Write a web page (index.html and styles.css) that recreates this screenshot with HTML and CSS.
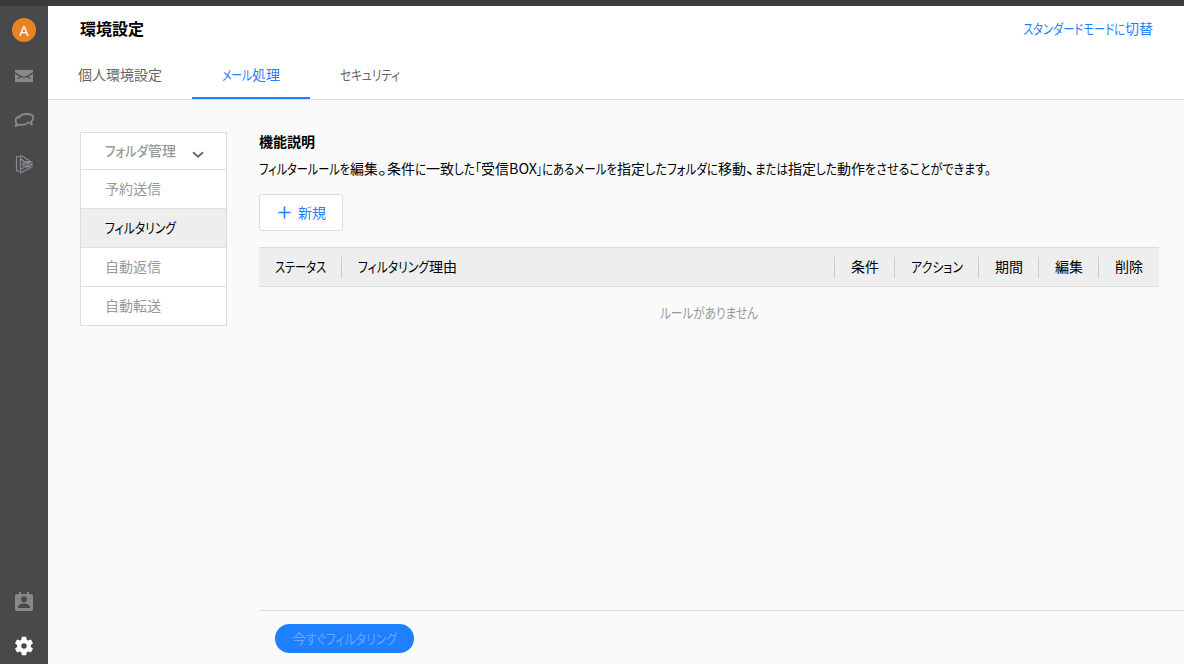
FILE: index.html
```html
<!DOCTYPE html>
<html lang="ja">
<head>
<meta charset="utf-8">
<title>環境設定</title>
<link rel="stylesheet" href="styles.css">
</head>
<body>
<div class="topbar"></div>
<div class="app">
  <nav class="rail">
    <div class="avatar">A</div>
    <svg class="icon mail" width="18" height="12" viewBox="0 0 18 12"><path fill="#86888a" d="M0 0h18v12H0z"/><path fill="none" stroke="#48494b" stroke-width="1.200" d="M0 2.800C3 5 6 7.300 9 7.300S15 5 18 2.800M5.800 6.200L2.800 8.400M12.200 6.200l3 2.200"/></svg>
    <svg class="icon chat" width="22" height="16" viewBox="0 0 22 16"><path fill="none" stroke="#86888a" stroke-width="1.800" stroke-linejoin="round" d="M5.500 6.500C7 3 10 2 13.500 2c4.500 0 6.800 1.200 6.800 3.700 0 1.600-.8 2.800-2 3.900l.6 2.900-2.800-1.900"/><path fill="none" stroke="#86888a" stroke-width="1.800" stroke-linejoin="round" d="M8 3.800C4.500 4.500 2.600 6.500 2.600 8.800c0 1 .4 1.800 1 2.400l-1 2.900 3.200-1.500c4 .6 8.200-.2 10.200-2.800"/></svg>
    <svg class="icon drive" width="18" height="20" viewBox="0 0 18 20"><path fill="none" stroke="#86888a" stroke-width="1.200" d="M4.500 17H1.500V2.500h3M5.500 1.300v17.400L16 13.500M5.500 1.300L15 7M5.500 4.800L9 7M5.500 15.200L9 13.500"/><path fill="#86888a" d="M7.500 7H17.500v6.500H7.500z"/><path fill="none" stroke="#48494b" stroke-width=".9" d="M7.500 8.200l5 2.800 5-2.800M8 12.800l2.500-2M17 12.800l-2.500-2"/></svg>
    <span class="spacer"></span>
    <svg class="icon contact" width="18" height="19" viewBox="0 0 18 19"><path fill="#86888a" fill-rule="evenodd" d="M4 0h2v2h6V0h2v2h2q2 0 2 2v13q0 2-2 2H2q-2 0-2-2V4q0-2 2-2h2zM9 4.200a3 3 0 1 0 0 6 3 3 0 0 0 0-6zM3 16h12v-1c0-2.200-3.500-3.500-6-3.500S3 12.800 3 15z"/></svg>
    <svg class="icon gear" width="24" height="24" viewBox="0 0 24 24"><path fill="#fff" d="M19.430 12.980c.04-.32.07-.64.07-.98s-.03-.66-.07-.98l2.110-1.650c.19-.15.24-.42.12-.64l-2-3.460c-.12-.22-.39-.3-.61-.22l-2.490 1c-.52-.4-1.080-.73-1.690-.98l-.38-2.650C14.460 2.180 14.250 2 14 2h-4c-.25 0-.46.180-.49.420l-.38 2.650c-.61.25-1.170.59-1.690.98l-2.490-1c-.23-.09-.49 0-.61.220l-2 3.460c-.13.220-.07.490.12.640l2.110 1.650c-.04.320-.07.650-.07.980s.03.660.07.980l-2.110 1.650c-.19.150-.24.420-.12.640l2 3.460c.12.220.39.300.61.220l2.490-1c.52.400 1.080.730 1.690.980l.38 2.650c.03.240.24.420.49.420h4c.25 0 .46-.18.49-.42l.38-2.650c.61-.25 1.170-.59 1.690-.98l2.490 1c.23.090.49 0 .61-.22l2-3.460c.12-.22.070-.49-.12-.64l-2.110-1.650zM12 15a3 3 0 1 1 0-6 3 3 0 0 1 0 6z"/></svg>
  </nav>
  <div class="page">
    <header class="header">
      <div class="titlebar">
        <h1 class="title">環境設定</h1>
        <a class="mode"><span data-w="102">スタンダードモードに</span>切替</a>
      </div>
      <div class="tabs">
        <a class="tab">個人環境設定</a>
        <a class="tab active"><span data-w="30">メール</span>処理</a>
        <a class="tab"><span data-w="60">セキュリティ</span></a>
      </div>
    </header>
    <div class="body">
      <aside class="menu">
        <a class="item folder"><span data-w="43">フォルダ</span>管理<svg class="chevron" width="12" height="8" viewBox="0 0 12 8"><path fill="none" stroke="#666" stroke-width="1.900" d="M1 1.200l5 4.600 5-4.600"/></svg></a>
        <a class="item">予約送信</a>
        <a class="item current"><span data-w="71">フィルタリング</span></a>
        <a class="item">自動返信</a>
        <a class="item">自動転送</a>
      </aside>
      <main class="main">
        <section class="content">
          <h2 class="heading">機能説明</h2>
          <p class="desc"><span data-w="91">フィルタールールを</span>編集<span class="stop" data-w="9">。</span>条件<span data-w="11">に</span>一致<span data-w="21">した</span><span data-w="6">「</span>受信<span data-w="28">BOX</span><span data-w="5">」</span><span data-w="75">にあるメールを</span>指定<span data-w="22">した</span><span data-w="51">フォルダに</span>移動<span data-w="9">、</span><span data-w="33">または</span>指定<span data-w="21">した</span>動作<span data-w="126">をさせることができます。</span></p>
          <button class="new"><svg width="13" height="13" viewBox="0 0 13 13"><path stroke="#1f80ff" stroke-width="1.500" d="M6.500 .5v12M.5 6.500h12"/></svg><span class="label">新規</span></button>
          <div class="thead">
            <div class="cell status"><span data-w="51">ステータス</span></div>
            <div class="cell reason"><span data-w="71">フィルタリング</span>理由</div>
            <div class="cell">条件</div>
            <div class="cell action"><span data-w="52">アクション</span></div>
            <div class="cell">期間</div>
            <div class="cell">編集</div>
            <div class="cell last">削除</div>
          </div>
          <p class="empty"><span data-w="98">ルールがありません</span></p>
        </section>
        <footer class="footer"><button class="run">今<span data-w="91">すぐフィルタリング</span></button></footer>
      </main>
    </div>
  </div>
</div>
<script src="fit.js"></script>
</body>
</html>
```
FILE: styles.css
```css
* { box-sizing: border-box; }
body {
  margin: 0; height: 664px; overflow: hidden; display: flex; flex-direction: column;
  font: 14px/20px "Noto Sans CJK JP", sans-serif; color: #000; background: #fafafa;
}
h1, h2, p { margin: 0; }
button { font: inherit; margin: 0; }
[data-w] { display: inline-block; white-space: nowrap; transform-origin: 0 50%; font-feature-settings: "palt"; }
.topbar { height: 6px; background: #3b3b3b; flex: none; }
.app { flex: 1; display: flex; min-height: 0; }
.rail { width: 48px; flex: none; background: #48494b; display: flex; flex-direction: column; align-items: center; padding: 12px 0 6px; }
.avatar { width: 24px; height: 24px; border-radius: 50%; background: #e98423; color: #fff; font: 15px/25px "Open Sans", sans-serif; text-align: center; }
.icon { flex: none; display: block; }
.mail { margin-top: 28px; }
.chat { margin-top: 30px; }
.drive { margin-top: 26px; }
.spacer { flex: 1; }
.gear { margin-top: 24px; width: 22px; height: 22px; margin-bottom: 1px; }
.page { flex: 1; min-width: 0; display: flex; flex-direction: column; }
.header { height: 94px; flex: none; background: #fff; border-bottom: 1px solid #ddd; display: flex; flex-direction: column; justify-content: space-between; }
.titlebar { display: flex; justify-content: space-between; padding: 12px 31px 0 32px; }
.title { font-size: 16px; line-height: 20px; font-weight: 700; }
.mode { color: #1f80ff; display: block; }
.tabs { display: flex; height: 50px; }
.tab { height: 50px; padding: 15px 30px 0; color: #666; }
.tab.active { color: #1f80ff; border-bottom: 2px solid #1f80ff; }
.body { flex: 1; display: flex; min-height: 0; padding-left: 32px; }
.menu { width: 147px; flex: none; margin: 32px 32px 0 0; border: 1px solid #ddd; background: #fff; align-self: flex-start; }
.item { display: flex; align-items: center; height: 39px; padding: 0 0 2px 24px; border-bottom: 1px solid #ddd; color: #999; }
.item:last-child { height: 38px; border-bottom: 0; }
.folder { height: 37px; font-weight: 500; }
.chevron { margin: 9px 0 0 16px; }
.current { background: #eee; color: #000; }
.main { flex: 1; min-width: 0; display: flex; flex-direction: column; }
.content { flex: 1; padding: 31px 25px 0 0; }
.heading { font-size: 14px; line-height: 20px; font-weight: 700; }
.desc { margin-top: 7px; height: 20px; white-space: nowrap; }
.new { margin-top: 16px; width: 84px; height: 37px; background: #fff; border: 1px solid #ddd; border-radius: 3px; color: #1f80ff; display: flex; align-items: center; justify-content: center; gap: 7px; padding: 0 0 0 2px; }
.label { padding-bottom: 2px; }
.thead { margin-top: 16px; height: 40px; background: #eee; border-top: 1px solid #ddd; border-bottom: 1px solid #ddd; display: flex; align-items: center; }
.cell { width: 60px; height: 21px; line-height: 19px; border-left: 1px solid #ccc; padding-left: 16px; white-space: nowrap; }
.status { width: 82px; border-left: 0; }
.reason { flex: 1; }
.action { width: 84px; }
.last { width: 61px; }
.empty { margin-top: 15px; color: #999; text-align: center; }
.footer { height: 54px; flex: none; border-top: 1px solid #ddd; padding: 13px 16px 0; }
.run { display: block; width: 139px; height: 29px; border: 0; border-radius: 15px; background: #1f80ff; color: #65a8ff; padding: 0 0 2px; line-height: 20px; }
```
FILE: fit.js
```js
// Condenses kana runs to their narrow UI widths.
document.querySelectorAll('[data-w]').forEach(function (el) {
  var target = Number(el.dataset.w);
  var natural = el.getBoundingClientRect().width;
  el.style.width = target + 'px';
  el.style.transform = 'scaleX(' + target / natural + ')';
});
```
